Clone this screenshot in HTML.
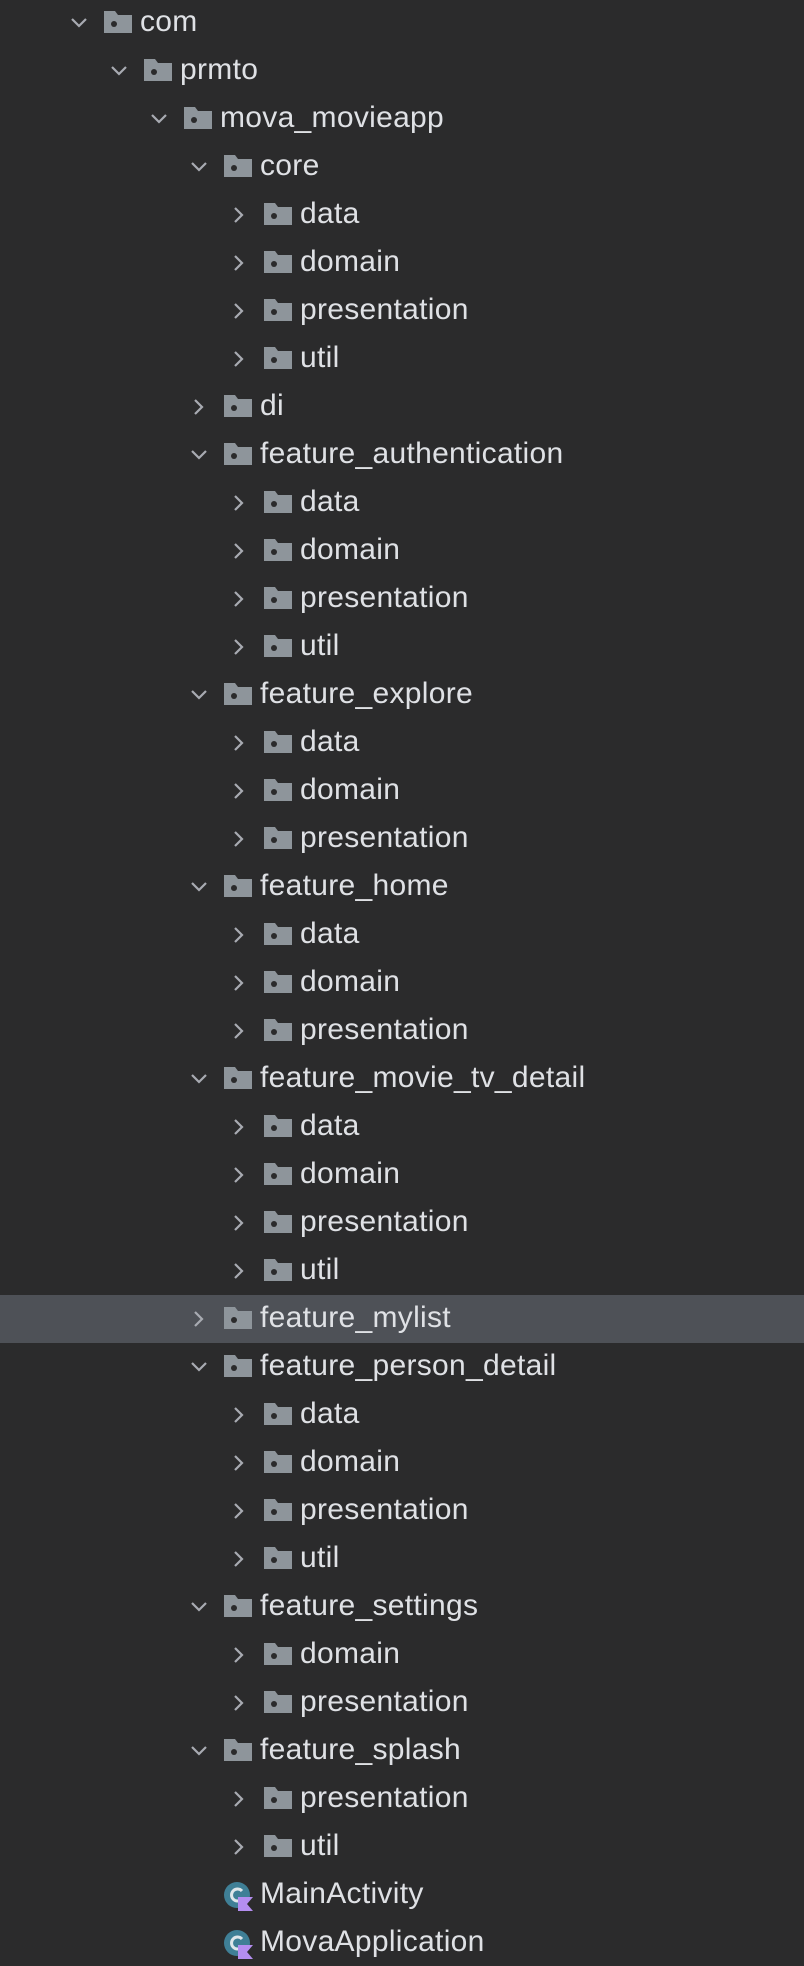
<!DOCTYPE html>
<html><head><meta charset="utf-8"><style>
html,body{margin:0;padding:0;background:#2b2b2c;width:804px;height:1966px;overflow:hidden}
#tree{position:relative;top:-1px}
.r{position:relative;height:48px;font-family:"Liberation Sans","DejaVu Sans",sans-serif;font-size:30px;letter-spacing:0.3px;color:#dfe1e5}
.r.sel{background:#4e5157}
.ch{position:absolute;top:15px;width:18px;height:18px}
.fd{position:absolute;top:12px;width:28px;height:22px}
.t{position:absolute;top:7px;white-space:nowrap;line-height:32px}
.ci{position:absolute;top:10px;width:30px;height:30px}
</style></head><body>
<div id="tree"></div>
<script>
var rows=[
[0,'v','com'],[1,'v','prmto'],[2,'v','mova_movieapp'],[3,'v','core'],
[4,'>','data'],[4,'>','domain'],[4,'>','presentation'],[4,'>','util'],
[3,'>','di'],[3,'v','feature_authentication'],
[4,'>','data'],[4,'>','domain'],[4,'>','presentation'],[4,'>','util'],
[3,'v','feature_explore'],[4,'>','data'],[4,'>','domain'],[4,'>','presentation'],
[3,'v','feature_home'],[4,'>','data'],[4,'>','domain'],[4,'>','presentation'],
[3,'v','feature_movie_tv_detail'],[4,'>','data'],[4,'>','domain'],[4,'>','presentation'],[4,'>','util'],
[3,'>','feature_mylist',1],
[3,'v','feature_person_detail'],[4,'>','data'],[4,'>','domain'],[4,'>','presentation'],[4,'>','util'],
[3,'v','feature_settings'],[4,'>','domain'],[4,'>','presentation'],
[3,'v','feature_splash'],[4,'>','presentation'],[4,'>','util'],
[3,'c','MainActivity'],[3,'c','MovaApplication']];
var h='';
rows.forEach(function(r){
 var c=79+40*r[0];
 h+='<div class="r'+(r[3]?' sel':'')+'">';
 if(r[1]=='v')h+='<svg class="ch" style="left:'+(c-9)+'px" viewBox="0 0 18 18"><path d="M2 5 L9 12 L16 5" fill="none" stroke="#a8abb2" stroke-width="2.2"/></svg>';
 if(r[1]=='>')h+='<svg class="ch" style="left:'+(c-9)+'px" viewBox="0 0 18 18"><path d="M5 2 L12 9 L5 16" fill="none" stroke="#a8abb2" stroke-width="2.2"/></svg>';
 if(r[1]=='c'){
  h+='<svg class="ci" style="left:'+(c+24)+'px" viewBox="0 0 30 30"><circle cx="14" cy="14" r="13" fill="#3f7f96"/><path d="M19 10 A6 6 0 1 0 19 18" fill="none" stroke="#dfe6ea" stroke-width="3"/><path d="M15 16 H30 L24 23 L30 30 H15 Z" fill="#b48ef0"/></svg>';
 } else {
  h+='<svg class="fd" style="left:'+(c+25)+'px" viewBox="0 0 28 22"><path d="M0 0 H11 L14 4 H28 V22 H0 Z" fill="#8e959b"/><circle cx="10" cy="13" r="3" fill="#2b2b2c"/></svg>';
 }
 h+='<div class="t" style="left:'+(c+61)+'px">'+r[2]+'</div></div>';
});
document.getElementById('tree').innerHTML=h;
</script>
</body></html>
